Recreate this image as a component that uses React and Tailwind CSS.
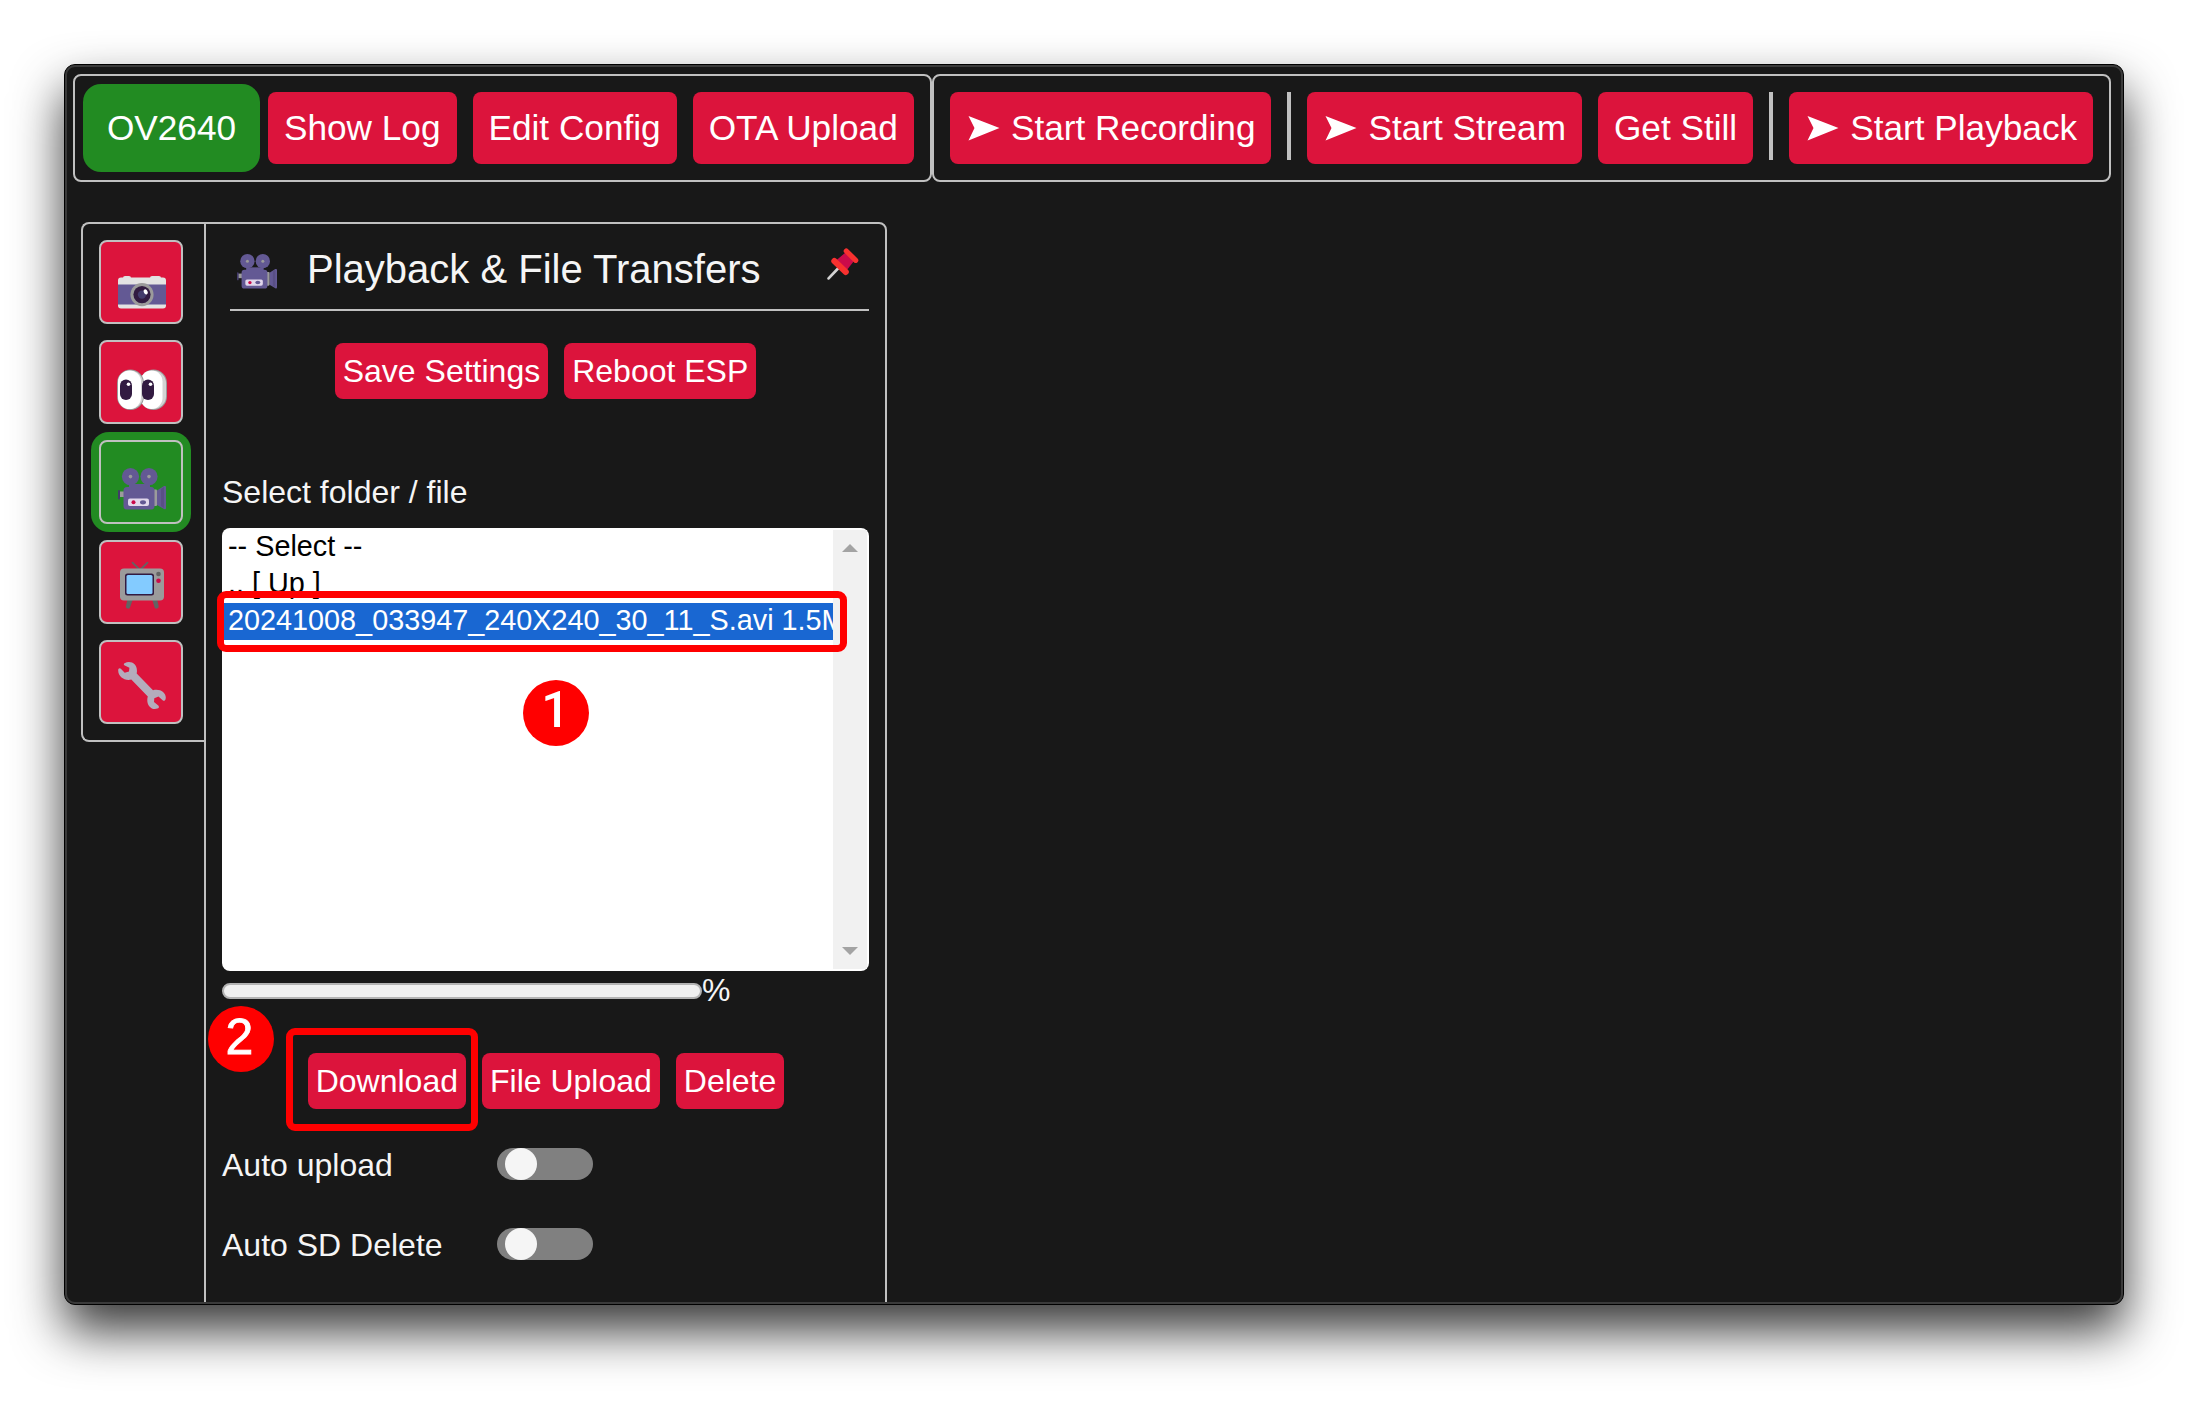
const topButton =
  "flex h-[72px] shrink-0 items-center rounded-lg bg-[#dc143c] px-4 text-[35.2px] leading-[40px] text-white whitespace-nowrap";
const smallButton =
  "flex h-14 shrink-0 items-center rounded-lg bg-[#dc143c] px-2 text-[32px] leading-[36px] text-white whitespace-nowrap";

function Arrow() {
  return (
    <svg className="mr-[10px] h-[72px] w-[35px] shrink-0" viewBox="0 0 35 72" fill="#fff">
      <path d="M2.5 24 L33.5 36 L2.5 48.5 L8.5 36 Z" />
    </svg>
  );
}

function Divider() {
  return <div className="mx-4 mb-1 h-[68px] w-1 shrink-0 bg-[#c0c0c0]" />;
}

function CameraIcon() {
  return (
    <svg className="h-[50px] w-[50px]" viewBox="0 0 50 50">
      <rect x="6" y="9" width="8" height="6" rx="2" fill="#e0e0e0" />
      <rect x="33" y="9" width="11" height="6" rx="2" fill="#e0e0e0" />
      <rect x="1" y="10.5" width="48" height="31" rx="3" fill="#e3e3e3" />
      <rect x="1" y="17.5" width="48" height="20" fill="#635994" />
      <circle cx="25" cy="27.6" r="11.6" fill="#9b9b9b" />
      <circle cx="25" cy="27.6" r="8.6" fill="#321b41" />
      <circle cx="25" cy="27.6" r="4.2" fill="#433b6b" />
      <ellipse cx="28.7" cy="24.8" rx="1.9" ry="2.7" transform="rotate(-28 28.7 24.8)" fill="#fff" />
    </svg>
  );
}

function EyesIcon() {
  return (
    <svg className="h-[50px] w-[50px]" viewBox="0 0 50 50">
      <rect x="23" y="4.5" width="27" height="40.5" rx="13.5" fill="#9b9b9b" />
      <rect x="24" y="5.5" width="25" height="38.5" rx="12.5" fill="#d3d3d3" />
      <rect x="23.5" y="5.5" width="22" height="38.5" rx="11" fill="#fff" />
      <rect x="0" y="4.5" width="27" height="40.5" rx="13.5" fill="#9b9b9b" />
      <rect x="1" y="5.5" width="25" height="38.5" rx="12.5" fill="#d3d3d3" />
      <rect x="1" y="5.5" width="23" height="38.5" rx="11.5" fill="#fff" />
      <rect x="3" y="14.5" width="12" height="20.5" rx="6" fill="#321b41" />
      <rect x="25" y="14.5" width="12" height="20.5" rx="6" fill="#321b41" />
      <circle cx="11.5" cy="19.3" r="1.8" fill="#fff" />
      <circle cx="33.5" cy="19.3" r="1.8" fill="#fff" />
    </svg>
  );
}

function MovieIcon({ className }) {
  return (
    <svg className={className} viewBox="0 0 48 42" preserveAspectRatio="none">
      <circle cx="12.5" cy="8.6" r="8.6" fill="#635994" />
      <circle cx="31" cy="8.6" r="8.6" fill="#635994" />
      <circle cx="12.5" cy="8.6" r="1.8" fill="#9b9b9b" />
      <circle cx="31" cy="8.6" r="1.8" fill="#9b9b9b" />
      <rect x="1" y="23.5" width="6" height="5.5" fill="#9b9b9b" />
      <rect x="0" y="22" width="2" height="9.5" rx="1" fill="#433b6b" />
      <path d="M39 22.5 L46 18 Q48 17.5 48 19 V40 Q48 42 46 41 L39 37 Z" fill="#635994" />
      <path d="M43 21 L46 19 V40 L43 38 Z" fill="#594f86" />
      <rect x="35" y="21.5" width="4" height="16.5" rx="1" fill="#9b9b9b" />
      <path d="M11 16 H32 V21 H11 Z" fill="#635994" />
      <rect x="5.5" y="19" width="31" height="22.5" rx="3.5" fill="#635994" />
      <rect x="10" y="30.5" width="21" height="7.5" rx="2" fill="#e1d8ec" />
      <circle cx="15.5" cy="34.3" r="2" fill="#ca0b4a" />
      <ellipse cx="25" cy="34.3" rx="3" ry="2.1" fill="#635994" />
    </svg>
  );
}

function TvIcon() {
  return (
    <svg className="h-[50px] w-[50px]" viewBox="0 0 50 50">
      <path d="M15.5 2.7 L23 10 L30.5 2.7" fill="none" stroke="#636363" strokeWidth="1.8" strokeLinecap="round" strokeLinejoin="round" />
      <path d="M10.5 39 H16 L13 47.5 Q12.5 49 10.5 48.5 Q8.3 48 9 46 Z M35 39 H40 L41.7 46 Q42 48 40 48.5 Q38.2 49 37.6 47.5 Z" fill="#636363" />
      <rect x="3" y="8.5" width="44" height="32" rx="4" fill="#9b9b9b" />
      <rect x="8" y="13.5" width="29" height="22" rx="2.5" fill="#321b41" />
      <rect x="9.5" y="15" width="26" height="19" rx="1.5" fill="#83cbff" />
      <circle cx="41.5" cy="14" r="2.3" fill="#636363" />
      <circle cx="41.5" cy="20.7" r="2.3" fill="#ca0b4a" />
    </svg>
  );
}

function WrenchIcon() {
  return (
    <svg className="h-[50px] w-[50px]" viewBox="0 0 50 50" fill="#b4acbc">
      <path d="M7.5 3.3 C14 -0.3 21.5 4.5 19.7 13.5 L36 30.3 C43.5 28.2 50 33.5 48.6 39 C48.3 40.8 46.8 41.3 45.6 40.2 L41.5 36.5 L37.3 38.2 L37 42 L41.3 45.6 C42.4 46.8 42 48 40.4 48.6 C34 50.7 28.5 44.5 30.8 36.6 L14.3 19.6 C7.5 21.3 1 16.5 1.2 10.2 C1.2 8.4 2.8 7.6 4.1 9 L7.7 12.7 L12 11.6 L12.4 7.7 L7.8 5.5 C6.5 4.7 6.5 3.8 7.5 3.3 Z" />
    </svg>
  );
}

function PinIcon() {
  return (
    <svg className="h-8 w-8" viewBox="0 0 32 32" strokeLinecap="round">
      <path d="M1.6 30.4 L11 20.5" stroke="#d3d3d3" strokeWidth="2.7" />
      <path d="M9 12.5 L18.5 4.5 L27 13 L19.5 22.5 Z" fill="#ca0b4a" />
      <path d="M19.3 3 L28.7 12.3" stroke="#f8312f" strokeWidth="5.2" />
      <path d="M7.3 13 L18.8 24" stroke="#f8312f" strokeWidth="6" />
    </svg>
  );
}

function Tile({ pad = "pt-[20px]", children }) {
  return (
    <div className={"flex h-[84px] w-[84px] items-center justify-center rounded-lg border-2 border-[#c0c0c0] bg-[#dc143c] pl-[2px] " + pad}>
      {children}
    </div>
  );
}

function Toggle() {
  return (
    <div className="flex h-8 w-24 rounded-full bg-[#808080] pl-2">
      <div className="h-8 w-8 rounded-full bg-[#f5f5f5]" />
    </div>
  );
}

function Setting({ label }) {
  return (
    <div className="flex h-8 items-center">
      <div className="w-[275px] pt-[2px] text-[32px] leading-[36px]">{label}</div>
      <Toggle />
    </div>
  );
}

export default function App() {
  return (
    <div className="h-[1401px] w-[2188px] overflow-hidden bg-white p-16 font-['Liberation_Sans',Arial,sans-serif] text-[#f5f5f5]">
      <div className="h-[1241px] w-[2060px] rounded-[11px] border border-black bg-[#181818] shadow-[0_26px_50px_rgba(0,0,0,0.78)]">
        <div className="relative h-full overflow-hidden rounded-[10px] border-2 border-[#3a3a3a] pt-[7px]">
          <header className="flex pl-[6px]">
            <div className="flex h-[108px] w-[859px] items-center rounded-lg border-2 border-[#c0c0c0] pl-2">
              <div className="flex h-[88px] w-[177px] items-center justify-center rounded-[18px] bg-[#228b22] text-[35.2px] text-white">
                OV2640
              </div>
              <div className="ml-2 flex gap-4">
                <div className={topButton}>Show Log</div>
                <div className={topButton}>Edit Config</div>
                <div className={topButton}>OTA Upload</div>
              </div>
            </div>
            <div className="flex h-[108px] w-[1179px] items-center rounded-lg border-2 border-[#c0c0c0] pl-4">
              <div className={topButton}><Arrow />Start Recording</div>
              <Divider />
              <div className={topButton}><Arrow />Start Stream</div>
              <div className="w-4" />
              <div className={topButton}>Get Still</div>
              <Divider />
              <div className={topButton}><Arrow />Start Playback</div>
            </div>
          </header>

          <main className="mt-10 flex items-start pl-[14px]">
            <nav className="flex h-[520px] w-[123px] flex-col gap-4 rounded-l-lg border-2 border-r-0 border-[#c0c0c0] pt-4 pl-4">
              <Tile><CameraIcon /></Tile>
              <Tile pad="pt-[16px]"><EyesIcon /></Tile>
              <div className="-m-2 flex h-[100px] w-[100px] items-center justify-center rounded-[18px] bg-[#228b22]">
                <div className="flex h-[84px] w-[84px] items-center justify-center rounded-lg border-2 border-[#c0c0c0] pt-[14px] pl-[2px]">
                  <MovieIcon className="h-[42px] w-12" />
                </div>
              </div>
              <Tile pad="pt-[5px]"><TvIcon /></Tile>
              <Tile pad="pt-[6px]"><WrenchIcon /></Tile>
            </nav>

            <section className="relative h-[1120px] w-[683px] rounded-tr-lg border-2 border-[#c0c0c0] px-4">
              <div className="ml-2 flex h-[87px] items-start border-b-2 border-[#c0c0c0]">
                <MovieIcon className="mt-[30px] ml-[7px] h-[35px] w-10" />
                <h1 className="mt-[23px] ml-[30px] text-[40px] leading-[44px] whitespace-nowrap">
                  Playback &amp; File Transfers
                </h1>
                <div className="mt-6 ml-auto mr-[10px]"><PinIcon /></div>
              </div>

              <div className="mt-8 flex justify-center gap-4">
                <div className={smallButton}>Save Settings</div>
                <div className={smallButton}>Reboot ESP</div>
              </div>

              <div className="mt-[75px] text-[32px] leading-[36px]">Select folder / file</div>

              <div className="mt-[18px] flex h-[443px] overflow-hidden rounded-lg bg-white p-[2px]">
                <div className="w-[609px] overflow-hidden text-[28.8px] leading-[34px] text-black whitespace-nowrap">
                  <div className="-mt-px h-[37px] pl-1">-- Select --</div>
                  <div className="h-[37px] pl-1">.. [ Up ]</div>
                  <div className="h-[37px] overflow-hidden bg-[#1967d2] pl-1 text-white">
                    20241008_033947_240X240_30_11_S.avi 1.5MB
                  </div>
                </div>
                <div className="flex w-[34px] flex-col items-center justify-between bg-[#f1f1f1] py-[14px]">
                  <svg className="h-2 w-4" viewBox="0 0 16 8" fill="#a3a3a3"><path d="M8 0 L16 8 H0 Z" /></svg>
                  <svg className="h-2 w-4" viewBox="0 0 16 8" fill="#a3a3a3"><path d="M0 0 H16 L8 8 Z" /></svg>
                </div>
              </div>

              <div className="mt-[1px] flex h-[38px] items-center">
                <div className="h-4 w-[480px] rounded-full border-2 border-[#b2b2b2] bg-[#efefef]" />
                <div className="pb-[3px] text-[32px] leading-[36px]">%</div>
              </div>

              <div className="mt-[43px] flex justify-center gap-4 pl-px">
                <div className={smallButton}>Download</div>
                <div className={smallButton}>File Upload</div>
                <div className={smallButton}>Delete</div>
              </div>

              <div className="mt-[39px] flex flex-col gap-12">
                <Setting label="Auto upload" />
                <Setting label="Auto SD Delete" />
              </div>

              <div className="absolute top-[367px] left-[11px] h-[61px] w-[630px] rounded-[9px] border-[7px] border-[#ff0000]" />
              <div className="absolute top-[804px] left-[80px] h-[103px] w-[192px] rounded-[9px] border-[7px] border-[#ff0000]" />
              <div className="absolute top-[456px] left-[317px] flex h-[66px] w-[66px] justify-center rounded-full bg-[#ff0000] pt-[4px] pr-[1px] font-[Roboto,sans-serif] text-[50px] leading-[52px] font-medium text-white">
                1
              </div>
              <div className="absolute top-[782px] left-[2px] flex h-[66px] w-[66px] justify-center rounded-full bg-[#ff0000] pt-[5px] pr-[3px] text-[50px] leading-[52px] text-white [-webkit-text-stroke:0.8px_white]">
                2
              </div>
            </section>
          </main>
        </div>
      </div>
    </div>
  );
}
